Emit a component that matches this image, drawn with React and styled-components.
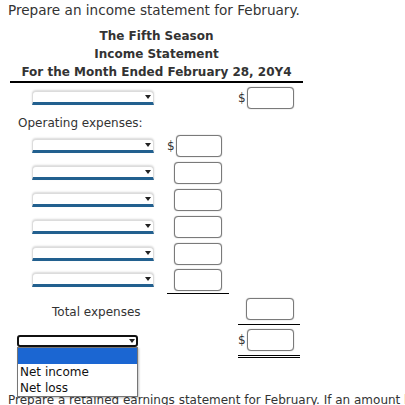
import React from 'react'
import styled, {createGlobalStyle} from 'styled-components'

const GlobalStyle = createGlobalStyle`
  body{
    margin:0;
    background:#fff;
    font-family: "DejaVu Sans", Verdana, sans-serif;
    color:#333;
    overflow:hidden;
  }
`

const Page = styled.div`
  padding-left:8px;
  width:397px;
  overflow:hidden;
`

const Prompt = styled.p`
  margin:0;
  font-size:13.6px;
  line-height:20px;
  white-space:nowrap;
`

const Header = styled.div`
  margin:7px 0 0 2px;
  width:293px;
  border-bottom:2px solid #000;
  text-align:center;
  font-weight:bold;
  font-size:12px;
  line-height:18px;
  color:#333;
`

const Row = styled.div`
  display:grid;
  grid-template-columns: 159px 62px 9px 62px;
  align-items:center;
  height:${p => p.h}px;
`

const Left = styled.div`
  display:flex;
  align-items:center;
  padding-left:${p => p.indent || 0}px;
  padding-top:${p => p.drop || 0}px;
  font-size:12px;
  white-space:nowrap;
  position:relative;
`

const Cell = styled.div`
  grid-column:${p => p.col};
  height:100%;
  display:flex;
  align-items:center;
  justify-content:flex-end;
  padding-right:${p => p.pr || 7}px;
  box-sizing:border-box;
  border-bottom:${p => p.rule || 'none'};
`

const Dollar = styled.span`
  font-size:12px;
  color:#333;
  margin-right:1px;
`

const Field = styled.div`
  width:46px;
  height:20px;
  border:1px solid #7a7a7a;
  border-radius:4px;
  box-shadow: 0 0 1px rgba(0,0,0,0.5);
  background:#fff;
`

const Select = styled.div`
  position:relative;
  width:120px;
  height:10px;
  border:1px solid #dcdcdc;
  border-bottom:3px solid #22608f;
  border-radius:4px 4px 0 0;
  box-shadow: 0 -1px 2px rgba(0,0,0,0.15);
  background:#fff;

  &::after{
    content:'';
    position:absolute;
    right:2px;
    top:3px;
    border-left:3px solid transparent;
    border-right:3px solid transparent;
    border-top:4px solid #222;
  }
`

const OpenSelect = styled.div`
  position:relative;
  width:117px;
  height:8px;
  border:2px solid #111;
  border-radius:3px;
  background:#fff;

  &::after{
    content:'';
    position:absolute;
    right:1px;
    top:2px;
    border-left:3px solid transparent;
    border-right:3px solid transparent;
    border-top:4px solid #222;
  }
`

const Options = styled.ul`
  position:absolute;
  left:9px;
  top:12px;
  width:119px;
  margin:0;
  padding:0;
  list-style:none;
  background:#fff;
  border:1px solid #767676;
  box-shadow: 1px 1px 2px rgba(0,0,0,0.25);
  z-index:10;
`

const Option = styled.li`
  height:16px;
  line-height:16px;
  font-size:12px;
  padding-left:2px;
  color:#111;
  background:${p => p.active ? '#1b66d2' : '#fff'};
`

const Next = styled.p`
  margin:34px 0 0;
  font-size:12px;
  line-height:16px;
  white-space:nowrap;
`

const expenseRows = [0, 1, 2, 3, 4, 5]

const App = () => {
  return (
    <Page>
      <GlobalStyle />
      <Prompt>Prepare an income statement for February.</Prompt>
      <Header>
        <div>The Fifth Season</div>
        <div>Income Statement</div>
        <div>For the Month Ended February 28, 20Y4</div>
      </Header>

      <Row h={29}>
        <Left indent={24}><Select /></Left>
        <Cell col={4} pr={6}><Dollar>$</Dollar><Field /></Cell>
      </Row>

      <Row h={21}>
        <Left indent={10}>Operating expenses:</Left>
      </Row>

      {expenseRows.map(i => (
        <Row h={26.8} key={i}>
          <Left indent={24}><Select /></Left>
          <Cell col={2} rule={i === 5 ? '1px solid #000' : 'none'}>
            {i === 0 && <Dollar>$</Dollar>}
            <Field />
          </Cell>
        </Row>
      ))}

      <Row h={31}>
        <Left indent={44} drop={5}>Total expenses</Left>
        <Cell col={4} pr={6} rule="1px solid #000"><Field /></Cell>
      </Row>

      <Row h={33}>
        <Left indent={9}>
          <OpenSelect />
          <Options>
            <Option active>&nbsp;</Option>
            <Option>Net income</Option>
            <Option>Net loss</Option>
          </Options>
        </Left>
        <Cell col={4} pr={6} rule="3px double #000"><Dollar>$</Dollar><Field /></Cell>
      </Row>

      <Next>Prepare a retained earnings statement for February. If an amount box does not require an entry, leave it blank.</Next>
    </Page>
  )
}

export default App
